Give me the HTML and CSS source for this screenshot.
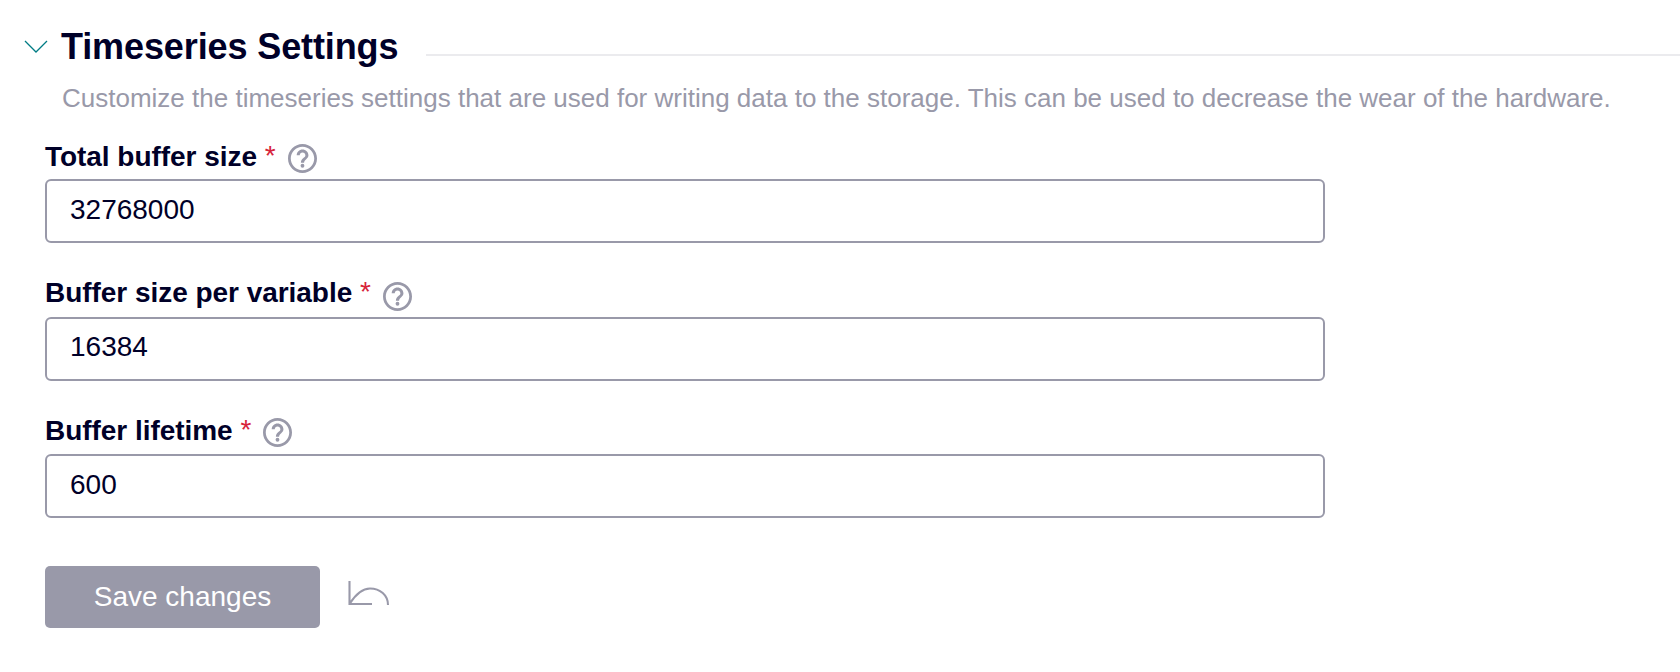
FILE: index.html
```
<!DOCTYPE html>
<html lang="en">
<head>
<meta charset="utf-8">
<title>Timeseries Settings</title>
<link rel="stylesheet" href="styles.css">
</head>
<body>
<svg width="0" height="0" class="defs" aria-hidden="true">
  <symbol id="help" viewBox="2 2 20 20">
    <path fill="currentColor" d="M12 2C6.48 2 2 6.48 2 12s4.48 10 10 10 10-4.48 10-10S17.52 2 12 2zm0 18.1c-4.47 0-8.1-3.63-8.1-8.1S7.53 3.9 12 3.9s8.1 3.63 8.1 8.1-3.63 8.1-8.1 8.1zM12 5.8c-2.21 0-4 1.79-4 4h2.1c0-1.1.8-2 1.9-2s2 .9 2 2c0 2-3.1 1.75-3.1 5.2h2.2c0-2.25 3-2.7 3-5.2 0-2.21-1.89-4-4.1-4z"/>
    <circle cx="12" cy="17" r="1.3" fill="currentColor"/>
  </symbol>
</svg>
<main class="settings">
  <header class="section-head">
    <svg class="chevron" width="24" height="14" viewBox="0 0 24 14"><path d="M1 1 12 12 23 1" fill="none" stroke="currentColor" stroke-width="1.3"/></svg>
    <h1 class="title">Timeseries Settings</h1>
    <span class="rule"></span>
  </header>
  <p class="description">Customize the timeseries settings that are used for writing data to the storage. This can be used to decrease the wear of the hardware.</p>
  <form class="form">
    <div class="field">
      <label class="label label-low" for="total">Total buffer size <span class="required">*</span><svg class="help"><use href="#help"/></svg></label>
      <input class="input" id="total" type="text" value="32768000">
    </div>
    <div class="field">
      <label class="label label-high" for="per-variable">Buffer size per variable <span class="required">*</span><svg class="help"><use href="#help"/></svg></label>
      <input class="input input-high" id="per-variable" type="text" value="16384">
    </div>
    <div class="field">
      <label class="label" for="lifetime">Buffer lifetime <span class="required">*</span><svg class="help"><use href="#help"/></svg></label>
      <input class="input" id="lifetime" type="text" value="600">
    </div>
    <div class="actions">
      <button class="save" type="button">Save changes</button>
      <svg class="undo" width="42" height="26" viewBox="0 0 42 26"><path d="M1.5 0V23H24M1.5 23C8.5 12 15 7.5 22 7.5C32 7.5 40 14 40 24" fill="none" stroke="currentColor" stroke-width="2.1"/></svg>
    </div>
  </form>
</main>
</body>
</html>
```
FILE: styles.css
```
* { box-sizing: border-box; }
body {
  margin: 0;
  background: #fff;
  color: #000028;
  font-family: "Liberation Sans", Arial, sans-serif;
  overflow: hidden;
}
.defs { display: block; }
.settings { padding-top: 26px; }
.section-head { display: flex; height: 42px; padding-left: 24px; }
.chevron { flex: none; margin: 14px 13px 0 0; color: #007c84; }
.title {
  margin: 0;
  font-size: 36px;
  line-height: 41px;
  letter-spacing: -0.11px;
  white-space: nowrap;
}
.rule { flex: 1; height: 2px; margin: 28px 0 0 28px; background: #ebebee; }
.description {
  margin: 15px 0 0 62px;
  color: #9999a9;
  font-size: 26px;
  line-height: 30px;
  white-space: nowrap;
}
.form { display: flex; flex-direction: column; gap: 28px; width: 1325px; padding: 26px 0 0 45px; }
.field { display: flex; flex-direction: column; height: 109.5px; }
.label {
  display: flex;
  height: 40px;
  padding-top: 1px;
  font-size: 28px;
  font-weight: 700;
  line-height: 32px;
  letter-spacing: -0.04px;
  white-space: pre;
}
.label-low { padding-top: 2px; }
.label-high { padding-top: 0; }
.required { margin-top: -1px; color: #d72339; font-weight: 400; }
.help { width: 29px; height: 29px; margin: 3px 0 0 12px; color: #9999a9; }
.label-high .help { margin-top: 5px; }
.input {
  width: 100%;
  height: 64px;
  padding: 0 23px 2px;
  border: 2px solid #9999a9;
  border-radius: 6px;
  background: #fff;
  color: #000028;
  font: 28px/32px "Liberation Sans", Arial, sans-serif;
}
.input-high { padding-bottom: 4px; }
.actions { display: flex; align-items: flex-start; padding-top: 14px; }
.save {
  width: 275px;
  height: 62px;
  padding: 0;
  border: 0;
  border-radius: 5px;
  background: #9999a9;
  color: #fff;
  font: 28px/32px "Liberation Sans", Arial, sans-serif;
}
.undo { margin: 15px 0 0 28px; color: #9999a9; }
```
